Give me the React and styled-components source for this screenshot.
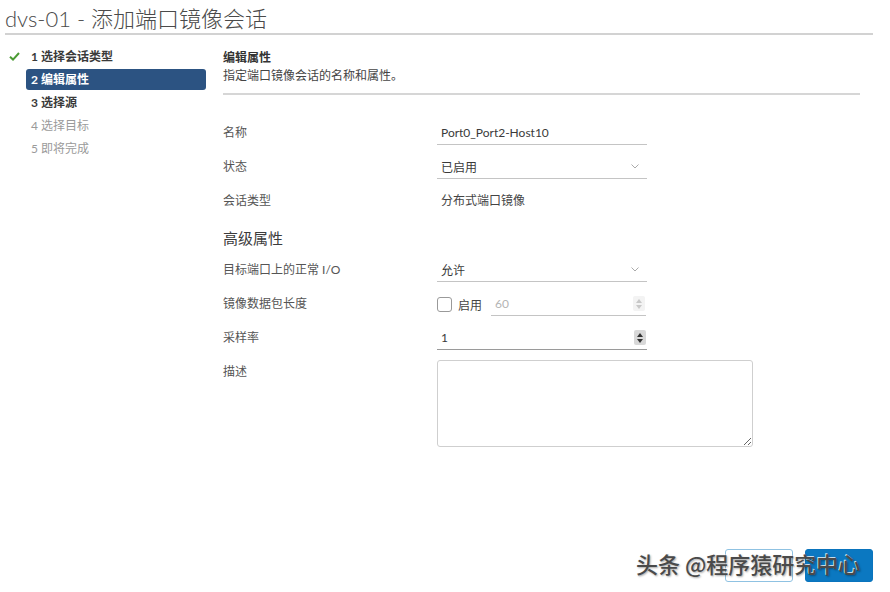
import React from 'react'
import styled, { createGlobalStyle } from 'styled-components'

const GlobalStyle = createGlobalStyle`
  html, body {
    margin: 0;
    padding: 0;
    background: #ffffff;
  }
  body {
    font-family: Lato, "Noto Sans", "Noto Sans CJK SC", sans-serif;
    color: #565656;
  }
`

const Page = styled.div`
  position: relative;
  width: 890px;
  height: 592px;
  box-sizing: border-box;
  padding: 0 17px 0 5px;
  overflow: hidden;
`

const Title = styled.h1`
  margin: 0;
  padding-top: 4px;
  font-size: 22px;
  line-height: 29px;
  font-weight: 300;
  color: #4a4a4a;
  border-bottom: 2px solid #d2d2d2;
`

const Body = styled.div`
  display: flex;
  padding-top: 10px;
`

const Sidebar = styled.ul`
  list-style: none;
  margin: 0;
  padding: 0;
  width: 201px;
  flex-shrink: 0;
`

const Step = styled.li`
  display: flex;
  align-items: center;
  height: 23px;
`

const CheckSlot = styled.span`
  width: 21px;
  display: flex;
  justify-content: center;
  padding-right: 2px;
  box-sizing: border-box;
`

const StepLabel = styled.span`
  flex: 1;
  height: 21px;
  line-height: 21px;
  padding: 0 5px;
  border-radius: 3px;
  font-size: 12px;
  font-weight: ${p => (p.$state === 'todo' ? 400 : 700)};
  color: ${p => (p.$state === 'active' ? '#ffffff' : p.$state === 'todo' ? '#9a9a9a' : '#3a3a3a')};
  background: ${p => (p.$state === 'active' ? '#2c5382' : 'transparent')};
`

const Main = styled.div`
  flex: 1;
  margin: 0 13px 0 17px;
  padding-top: 4px;
`

const Header = styled.div`
  padding-bottom: 8px;
  border-bottom: 2px solid #d6d6d6;
  margin-bottom: 26px;
`

const HeaderTitle = styled.div`
  font-size: 12px;
  line-height: 18px;
  font-weight: 700;
  color: #333;
`

const HeaderText = styled.div`
  font-size: 12px;
  line-height: 18px;
  color: #444;
`

const Form = styled.div`
  display: grid;
  grid-template-columns: 214px 1fr;
  row-gap: 10px;
  align-items: center;
`

const Label = styled.div`
  font-size: 12px;
  line-height: 24px;
  color: #555;
  align-self: ${p => (p.$top ? 'start' : 'center')};
`

const Section = styled.div`
  grid-column: 1 / 3;
  font-size: 15px;
  line-height: 20px;
  color: #3c3c3c;
  margin-top: 5px;
`

const Field = styled.div`
  position: relative;
  width: ${p => p.$width || 210}px;
  height: 24px;
  box-sizing: border-box;
  border-bottom: 1px solid ${p => (p.$dark ? '#9a9a9a' : '#c4c4c4')};
  display: flex;
  align-items: center;
  padding-left: 4px;
  font-size: 12px;
  color: ${p => (p.$muted ? '#b4b4b4' : '#3a3a3a')};
`

const Value = styled.div`
  font-size: 12px;
  line-height: 24px;
  color: #444;
  padding-left: 4px;
`

const Chevron = styled.svg`
  position: absolute;
  right: 8px;
  top: 9px;
`

const Spinner = styled.div`
  position: absolute;
  right: 1px;
  top: 4px;
  width: 12px;
  height: 15px;
  border-radius: 2px;
  background: ${p => (p.$off ? '#f3f3f3' : '#d8d8d8')};
  display: flex;
  flex-direction: column;
  align-items: center;
  justify-content: center;
  gap: 2px;
`

const Tri = styled.span`
  width: 0;
  height: 0;
  border-left: 3px solid transparent;
  border-right: 3px solid transparent;
  ${p => (p.$down ? 'border-top' : 'border-bottom')}: 4px solid ${p => (p.$off ? '#c8c8c8' : '#333')};
`

const CheckRow = styled.div`
  display: flex;
  align-items: center;
`

const Box = styled.span`
  width: 13px;
  height: 13px;
  border: 1px solid #9a9a9a;
  border-radius: 3px;
  margin-right: 6px;
`

const CheckText = styled.span`
  font-size: 12px;
  color: #444;
  margin-right: 9px;
`

const TextArea = styled.textarea`
  width: 316px;
  height: 87px;
  box-sizing: border-box;
  border: 1px solid #cfcfcf;
  border-radius: 3px;
  resize: both;
  font-family: inherit;
  outline: none;
`

const Buttons = styled.div`
  position: absolute;
  right: 17px;
  bottom: 10px;
  display: flex;
  gap: 12px;
`

const Button = styled.button`
  width: 68px;
  height: 33px;
  border-radius: 3px;
  border: 1px solid ${p => (p.$primary ? '#0a74bd' : '#8fc2e2')};
  background: ${p => (p.$primary ? '#0b78c1' : '#ffffff')};
`

const Watermark = styled.div`
  position: absolute;
  left: 636px;
  top: 549px;
  font-family: "Noto Sans CJK SC", sans-serif;
  font-size: 22px;
  line-height: 28px;
  font-weight: 500;
  color: #4a4a4a;
  text-shadow: 1px 1px 2px rgba(0, 0, 0, 0.35), -1px -1px 0 rgba(255, 255, 255, 0.8);
  white-space: nowrap;
  pointer-events: none;
`

const steps = [
  { n: 1, text: '选择会话类型', state: 'done' },
  { n: 2, text: '编辑属性', state: 'active' },
  { n: 3, text: '选择源', state: 'next' },
  { n: 4, text: '选择目标', state: 'todo' },
  { n: 5, text: '即将完成', state: 'todo' },
]

const Check = () => (
  <svg width="11" height="9" viewBox="0 0 11 9">
    <path d="M1 4.8 L4 7.6 L10 1" fill="none" stroke="#4b9b34" strokeWidth="2" />
  </svg>
)

const Down = () => (
  <Chevron width="8" height="5" viewBox="0 0 8 5">
    <path d="M0.5 0.5 L4 4 L7.5 0.5" fill="none" stroke="#aaa" strokeWidth="1" />
  </Chevron>
)

const Spin = ({ off }) => (
  <Spinner $off={off}>
    <Tri $off={off} />
    <Tri $off={off} $down />
  </Spinner>
)

export default function App() {
  return (
    <Page>
      <GlobalStyle />
      <Title>dvs-01 - 添加端口镜像会话</Title>
      <Body>
        <Sidebar>
          {steps.map(s => (
            <Step key={s.n}>
              <CheckSlot>{s.state === 'done' && <Check />}</CheckSlot>
              <StepLabel $state={s.state}>{s.n} {s.text}</StepLabel>
            </Step>
          ))}
        </Sidebar>
        <Main>
          <Header>
            <HeaderTitle>编辑属性</HeaderTitle>
            <HeaderText>指定端口镜像会话的名称和属性。</HeaderText>
          </Header>
          <Form>
            <Label>名称</Label>
            <Field>Port0_Port2-Host10</Field>

            <Label>状态</Label>
            <Field>已启用<Down /></Field>

            <Label>会话类型</Label>
            <Value>分布式端口镜像</Value>

            <Section>高级属性</Section>

            <Label>目标端口上的正常 I/O</Label>
            <Field>允许<Down /></Field>

            <Label>镜像数据包长度</Label>
            <CheckRow>
              <Box />
              <CheckText>启用</CheckText>
              <Field $width={155} $muted>60<Spin off /></Field>
            </CheckRow>

            <Label>采样率</Label>
            <Field $dark>1<Spin /></Field>

            <Label $top>描述</Label>
            <TextArea />
          </Form>
        </Main>
      </Body>
      <Buttons>
        <Button />
        <Button $primary />
      </Buttons>
      <Watermark>头条 @程序猿研究中心</Watermark>
    </Page>
  )
}
